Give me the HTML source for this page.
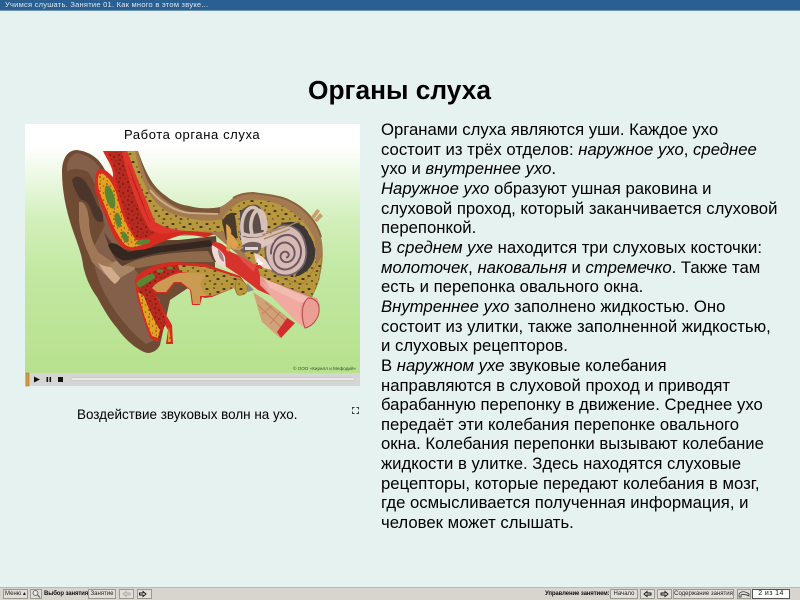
<!DOCTYPE html>
<html lang="ru"><head><meta charset="utf-8"><title>Органы слуха</title>
<style>
html,body{margin:0;padding:0;width:800px;height:600px;overflow:hidden;background:#e6f2ef;font-family:"Liberation Sans",sans-serif;color:#000}
#t{position:absolute;left:0;top:0;width:800px;height:11px;background:#2a5f92;border-bottom:1px solid #6f94b5;color:#dfe8f0;font-size:7.5px;line-height:10px;padding-left:5px;box-sizing:border-box;letter-spacing:.25px;white-space:nowrap}
h1{position:absolute;left:0;top:75px;width:799px;margin:0;text-align:center;font-size:26.3px;line-height:30px;font-weight:bold}
.l{position:absolute;left:381px;font-size:16.72px;line-height:20px;white-space:nowrap}
#cap{position:absolute;left:77px;top:406px;font-size:13.45px;line-height:18px;white-space:nowrap}
#pic{position:absolute;left:0;top:0}
#bar{position:absolute;left:0;top:587px;width:800px;height:13px;background:#d8d5ce;border-top:1px solid #bcbab3;box-sizing:border-box}
.b{position:absolute;top:589px;height:10px;box-sizing:border-box;background:#e2dfd8;border:1px solid #9a9a94;font-size:6px;line-height:8px;text-align:center;color:#222;white-space:nowrap}
.s{position:absolute;top:589px;font-size:6px;line-height:10px;font-weight:bold;white-space:nowrap;color:#111;letter-spacing:-.12px}
</style></head><body>
<div id="t">Учимся слушать. Занятие 01. Как много в этом звуке...</div>
<h1>Органы слуха</h1>
<svg id="pic" width="800" height="600" viewBox="0 0 800 600" xmlns="http://www.w3.org/2000/svg">
<defs>
<linearGradient id="g" x1="0" y1="0" x2="0" y2="1"><stop offset="0" stop-color="#fff"/><stop offset=".09" stop-color="#fff"/><stop offset=".38" stop-color="#d3efbc"/><stop offset=".6" stop-color="#c2e8a1"/><stop offset="1" stop-color="#b7e18d"/></linearGradient>
<pattern id="d" width="17" height="13" patternUnits="userSpaceOnUse"><rect width="17" height="13" fill="#b8983c"/><ellipse cx="3" cy="3" rx="1.6" ry="1" fill="#43301c"/><ellipse cx="10" cy="2" rx="1" ry=".8" fill="#56401f"/><ellipse cx="14" cy="6" rx="1.7" ry="1" fill="#43301c"/><ellipse cx="6" cy="8" rx="1.2" ry=".9" fill="#56401f"/><ellipse cx="11" cy="11" rx="1.5" ry=".8" fill="#43301c"/><ellipse cx="1" cy="11" rx=".8" ry=".7" fill="#56401f"/></pattern>
<pattern id="r" width="9" height="9" patternUnits="userSpaceOnUse"><rect width="9" height="9" fill="#b62a20"/><circle cx="2" cy="2" r="1" fill="#7c1a14"/><circle cx="6" cy="4" r="1.1" fill="#861d15"/><circle cx="3" cy="7" r=".9" fill="#7c1a14"/><circle cx="8" cy="8" r=".7" fill="#861d15"/></pattern>
<pattern id="o" width="7" height="7" patternUnits="userSpaceOnUse"><rect width="7" height="7" fill="#e3a21f"/><circle cx="2" cy="2" r=".9" fill="#93451a"/><circle cx="5.500" cy="4" r=".8" fill="#a84e18"/><circle cx="2.500" cy="6" r=".6" fill="#93451a"/></pattern>
</defs>
<rect x="25" y="124" width="335" height="249" fill="url(#g)"/>

<!-- outer ear -->
<path d="M77 150C68 150 62 158 62 172C62 190 66 210 72 228C78 245 82 255 83 265C86 280 92 290 97 297C104 310 110 320 117 328C124 338 132 345 137 348C143 352 146 353 149 353C155 352 158 349 160 345L170 300L215 270L215 240L130 240L100 180L105 170C100 160 92 152 77 150Z" fill="#6f4b34"/>
<path d="M77 153C70 155 66 162 67 172C71 168 80 168 88 172C93 178 96 186 98 200L105 225L92 250C94 265 96 275 102 288C108 302 125 328 146 344L155 340L160 300L135 270L120 240L100 195C97 178 98 170 100 168C94 160 88 155 77 153Z" fill="#84604a"/>
<path d="M72 180C75 174 82 176 87 184C92 192 94 197 97 205C101 209 104 214 103 221C98 224 95 220 92 213C90 204 85 200 81 200C78 195 74 190 72 180Z" fill="#4c362b"/>
<path d="M79 202C84 200 88 208 89 220C89 232 92 242 98 252C106 258 112 262 118 266L105 275L92 262C86 248 80 235 79 220Z" fill="#a07858"/>
<path d="M98 263C106 268 112 266 120 270C124 274 120 280 115 284C112 282 106 276 98 263Z" fill="#d2ab8b"/>
<path d="M109 265C118 258 128 258 138 262L134 270L120 278Z" fill="#a88566"/>
<path d="M104 232C110 240 116 252 126 250L160 242L216 236L218 262L165 262C148 262 132 264 122 266C112 258 108 244 104 232Z" fill="#5d4130"/>
<path d="M108 245C113 240 120 246 128 252L160 246L210 240L214 246L165 252C145 254 132 262 122 260C114 257 110 250 108 245Z" fill="#352620"/>
<path d="M125 265C140 256 170 252 208 251L214 262L170 262L138 268Z" fill="#8e6a4b"/>

<!-- head skin -->
<path d="M127 151H138C141 160 145 170 149 177C154 186 159 191 166 196C173 202 181 205 189 206C200 209 212 209 220 207C225 205 229 201 233 198C240 194 247 193 253 193C270 195 283 197 290 201C305 208 317 222 321 237C324 250 323 265 319 280C316 291 312 296 310 298L285 290L250 265L215 235L165 236L145 215Z" fill="#a47b50"/>
<path d="M138 151C141 160 145 170 149 177C154 186 159 191 166 196C173 202 181 205 189 206C200 209 212 209 220 207L220 213C205 215 190 213 180 209C165 202 155 192 148 182C143 170 140 160 138 151Z" fill="#7a5738"/>
<path d="M150 190C160 202 175 212 190 213L218 214" stroke="#cfae8a" stroke-width="1.800" fill="none"/>
<path d="M233 198C240 194 247 193 253 193C270 195 283 197 290 201C305 208 317 222 321 237" stroke="#8a623e" stroke-width="2" fill="none"/>
<!-- bone -->
<path d="M127 151H135C137 163 141 176 145 185C150 197 157 204 162 208C170 214 178 216 185 217C198 221 210 222 222 219C227 212 233 206 240 202C250 198 266 199 280 205C295 212 308 224 314 238C317 252 317 268 313 282L311 296L300 293L262 274L225 232L185 231L155 225C148 215 143 205 140 195Z" fill="url(#d)"/>
<path d="M222 221C226 215 230 212 234 213C237 222 236 232 238 238L226 240Z" fill="#4a3a2c"/>
<path d="M280 225C290 219 302 222 308 232C311 240 313 255 311 262L300 230Z" fill="#3c3636"/>

<!-- upper red cartilage -->
<path d="M103 151H127L137 178L155 222C165 228 175 231 190 231L212 233C214 234 210 237 204 237L185 234C170 238 160 243 155 245C148 249 143 250 138 250C130 251 126 250 122 247C117 242 113 235 110 228L98 198C95 192 94 187 95 182C95 176 96 172 98 170C101 168 104 169 105 170C108 172 111 175 113 177C114 168 107 160 103 151Z" fill="#d72a20"/>
<path d="M99 174C103 172 106 176 109 179C113 185 116 190 118 200C122 215 127 228 136 240L148 243L135 247C128 248 124 245 120 238C115 230 112 224 109 216L100 194C98 187 97 180 99 174Z" fill="url(#o)"/>
<path d="M108 152H122C124 168 131 185 138 202C144 215 150 225 156 232L147 238L136 238C129 226 124 212 121 200C118 190 115 180 115 172C114 165 110 158 108 152Z" fill="url(#r)"/>
<path d="M122 151H127L137 178L155 222C165 228 175 231 190 231L160 234L150 230C138 210 128 180 122 151Z" fill="#e0352a"/>
<path d="M128 165L146 212M132 178L150 222" stroke="#a8241c" stroke-width=".6"/>
<ellipse cx="110" cy="197" rx="4.200" ry="12" transform="rotate(-16 110 197)" fill="#5a8533"/>
<ellipse cx="118" cy="220" rx="3" ry="7.500" transform="rotate(-10 118 220)" fill="#5a8533"/>
<ellipse cx="125" cy="237" rx="2.800" ry="6" transform="rotate(-25 125 237)" fill="#5a8533"/>
<ellipse cx="143" cy="242" rx="7.500" ry="2.500" transform="rotate(-10 143 242)" fill="#5a8533"/>

<!-- lower tissue -->
<path d="M135 280C136 277 137 276 138 275C144 270 150 267 157 265C163 263 169 262 175 262L205 264L240 276L245 283L248 290L238 295L234 288L212 297L205 298L202 297L200 305H192L190 290L180 283H175L167 293H157L155 293L165 313L172 325L173 344H166L168 330L165 325L158 342L150 338L143 317L137 297Z" fill="#d72a20"/>
<path d="M138 284C144 275 156 268 175 265L192 267C175 272 160 278 152 288L158 300C162 310 167 322 165 325L160 338L152 336L146 316L140 298Z" fill="url(#r)"/>
<path d="M138 292C141 305 145 320 152 336L158 338L160 330C155 322 148 308 144 296Z" fill="url(#o)"/>
<path d="M169 327L171 342H168C168 338 168 332 169 327Z" fill="url(#o)"/>
<path d="M136 283C141 278 146 276 152 273L156 277L149 282L141 287C139 288 137 286 136 283Z" fill="#5a8533"/>
<ellipse cx="160" cy="271" rx="3.500" ry="1.800" fill="#5a8533"/>
<ellipse cx="170" cy="268" rx="3" ry="1.500" fill="#5a8533"/>
<path d="M152 288C156 283 160 281 163 280C170 276 175 274 180 273L205 272L234 284L212 295L205 296L200 296L200 304H193L191 290L181 282H174L166 292H157Z" fill="#cb9a53"/>
<path d="M178 265L205 267L240 278L245 283L248 290L238 295L234 288L212 296L204 293L200 284L206 274L180 272Z" fill="url(#d)"/>
<path d="M237 279C241 279 246 283 248 288C248 293 243 296 238 295C235 292 234 285 237 279Z" fill="url(#d)" stroke="#8f7130" stroke-width=".7"/>
<path d="M247 283L254 290L248 292Z" fill="#8f8a84"/>

<!-- muscle -->
<path d="M253 292L262 322L280 338L295 323L268 302Z" fill="#cfa278"/>
<path d="M258 305L282 328M265 302L287 322M262 314L272 306M270 324L280 312" stroke="#c9805e" stroke-width="1"/>
<path d="M277 332L287 318L295 323L281 338Z" fill="#d42c2e"/>

<!-- middle ear -->
<path d="M212 243C218 240 225 245 231 252L238 255L247 263L260 265L268 272L262 284L274 297L258 290L240 276L225 266L214 255Z" fill="#d8322c"/>
<path d="M212 245C218 248 223 252 225 257L226 269C222 267 218 265 216 262C213 256 211 250 212 245Z" fill="#efd9d6"/>
<path d="M218 249C222 252 224 257 224 262C220 260 218 255 218 249Z" fill="#a58284"/>
<path d="M226 224C230 226 232 230 231 234C234 236 238 242 239 246L234 250L231 247L229 252L226 250C228 243 226 235 226 224Z" fill="#dda04c"/>
<path d="M238 255L256 265L254 272L243 262Z" fill="#e44c44"/>

<!-- Eustachian tube -->
<path d="M260 275L268 280L312 297L317 298L320 305L315 320L305 328L298 323L272 297L260 285Z" fill="#e89a90"/>
<path d="M262 282L290 296L302 303C299 312 300 318 305 328L298 323L272 297Z" fill="#f2a9a0"/>
<path d="M262 276L290 290L310 298C306 300 303 302 302 303L270 288Z" fill="#f3bcb2"/>
<path d="M308 298C316 298 320 304 319 312C318 320 311 327 305 328C301 318 301 304 308 298Z" fill="#ec9d94" stroke="#b44648" stroke-width="1"/>

<!-- lower right bone -->
<path d="M258 269C264 266 268 268 272 272C285 280 295 284 304 283C310 276 316 266 322 255L319 280L312 297L268 280L260 275Z" fill="url(#d)" stroke="#8f7130" stroke-width=".5"/>

<!-- cochlea -->
<g transform="translate(286 250) scale(1.08) translate(-286 -250)">
<path d="M282 225C298 222 311 235 313 250C314 262 306 272 294 275C300 265 304 250 300 238C295 230 290 227 282 225Z" fill="#3c3636"/>
<path d="M280 228C275 230 270 234 268 241C265 254 268 266 278 272C288 276 298 272 303 262C307 252 304 237 296 231C291 227 285 226 280 228Z" fill="#d6bab3" stroke="#6f6068" stroke-width="1.600"/>
<path d="M272 254C272 244 278 236 288 236C297 237 302 248 299 257C296 266 286 271 279 266C272 261 274 248 281 244C287 241 294 246 294 253C294 260 286 264 282 259C279 255 283 250 287 252C290 254 288 257 286 257" fill="none" stroke="#6e5560" stroke-width="1.800"/>
</g>
<!-- canals -->
<path d="M240 212C246 205 254 203 259 206C265 212 268 225 265 236L240 240Z" fill="#5b5049"/>
<g fill="none" stroke="#d7c0b8" stroke-width="3.600">
<path d="M243 236C240 224 243 212 250 208C258 205 262 215 263 230"/>
<path d="M252 234C249 224 252 214 257 210C265 210 267 222 265 234"/>
<path d="M242 233C248 237 258 236 270 232"/>
</g>
<path d="M240 235C248 240 260 238 270 234L274 242L262 248L243 247Z" fill="#dcc6be"/>
<path d="M262 235L288 226L305 219M264 239L290 229M266 232L282 228" stroke="#a8885e" stroke-width="1.300" fill="none"/>
<path d="M243 245C248 241 256 241 261 244C262 248 260 253 256 254C252 250 248 251 244 253C240 252 240 248 243 245Z" fill="#6d5e5c"/>
<path d="M245 247H258V250H245Z" fill="#e2d5d0"/>
<path d="M254 253C258 254 263 256 267 262L272 270L264 268L256 262Z" fill="#efd9d2"/>
<path d="M257 258L264 264L258 265Z" fill="#fff"/>
<path d="M234 248C238 250 241 249 243 247" stroke="#caa06a" stroke-width="1.500" fill="none"/>
<path d="M311 217L317 209L320 211L314 219Z M314 220L320 213L323 216L317 222Z" fill="#c9a06b"/>

<!-- copyright -->
<text x="293" y="370" font-family="Liberation Sans, sans-serif" font-size="4.6" fill="#3b4a30">© ООО «Кирилл и Мефодий»</text>
<!-- player -->
<rect x="25" y="373" width="335" height="13" fill="#d5d5d3"/>
<rect x="26" y="373" width="3" height="13" fill="#e39a2b" stroke="#8d7b55" stroke-width=".6"/>
<path d="M34 376.500L40 379.500L34 382.500Z" fill="#111"/>
<rect x="46.500" y="377" width="1.600" height="5" fill="#111"/><rect x="49.500" y="377" width="1.600" height="5" fill="#111"/>
<rect x="58" y="377" width="5" height="5" fill="#111"/>
<rect x="71" y="378" width="284" height="2" rx="1" fill="#fbfbfa" stroke="#b3b3b1" stroke-width=".5"/>
<g fill="#3d4142"><path d="M352 407h2.500v1h-1.500v1.500h-1zM359 407h-2.500v1h1.500v1.500h1zM352 414h2.500v-1h-1.500v-1.500h-1zM359 414h-2.500v-1h1.500v-1.500h1z"/></g>
</svg>
<div style="position:absolute;left:124px;top:127px;font-size:13px;line-height:16px;letter-spacing:.6px;white-space:nowrap">Работа органа слуха</div>
<div id="cap">Воздействие звуковых волн на ухо.</div>

<div class="l" style="top:120px">Органами слуха являются уши. Каждое ухо</div>
<div class="l" style="top:139.6px">состоит из трёх отделов: <i>наружное ухо</i>, <i>среднее</i></div>
<div class="l" style="top:159.3px">ухо и <i>внутреннее ухо</i>.</div>
<div class="l" style="top:179px"><i>Наружное ухо</i> образуют ушная раковина и</div>
<div class="l" style="top:198.6px">слуховой проход, который заканчивается слуховой</div>
<div class="l" style="top:218.3px">перепонкой.</div>
<div class="l" style="top:237.9px">В <i>среднем ухе</i> находится три слуховых косточки:</div>
<div class="l" style="top:257.6px"><i>молоточек</i>, <i>наковальня</i> и <i>стремечко</i>. Также там</div>
<div class="l" style="top:277.2px">есть и перепонка овального окна.</div>
<div class="l" style="top:296.9px"><i>Внутреннее ухо</i> заполнено жидкостью. Оно</div>
<div class="l" style="top:316.5px">состоит из улитки, также заполненной жидкостью,</div>
<div class="l" style="top:336.2px">и слуховых рецепторов.</div>
<div class="l" style="top:355.8px">В <i>наружном ухе</i> звуковые колебания</div>
<div class="l" style="top:375.5px">направляются в слуховой проход и приводят</div>
<div class="l" style="top:395.1px">барабанную перепонку в движение. Среднее ухо</div>
<div class="l" style="top:414.8px">передаёт эти колебания перепонке овального</div>
<div class="l" style="top:434.4px">окна. Колебания перепонки вызывают колебание</div>
<div class="l" style="top:454.1px">жидкости в улитке. Здесь находятся слуховые</div>
<div class="l" style="top:473.7px">рецепторы, которые передают колебания в мозг,</div>
<div class="l" style="top:493.4px">где осмысливается полученная информация, и</div>
<div class="l" style="top:513px">человек может слышать.</div>

<div id="bar"></div>
<div class="b" style="left:3px;width:25px">Меню ▴</div>
<div class="b" style="left:30px;width:12px"></div>
<svg style="position:absolute;left:31px;top:589px" width="10" height="10" viewBox="0 0 10 10"><circle cx="4.500" cy="4" r="2.500" fill="#e8e8e8" stroke="#555" stroke-width=".8"/><path d="M6.500 6L9 8.500" stroke="#555" stroke-width="1"/></svg>
<div class="s" style="left:44px">Выбор занятия:</div>
<div class="b" style="left:88px;width:28px">Занятие</div>
<div class="b" style="left:119px;width:15px"></div>
<div class="b" style="left:137px;width:15px"></div>
<svg style="position:absolute;left:118px;top:589px" width="34" height="10" viewBox="0 0 34 10"><path d="M5 5L8 2.500V4H12V6H8V7.500Z" fill="none" stroke="#aaa" stroke-width=".9"/><path d="M28 5L25 2.500V4H21.500V6H25V7.500Z" fill="#e8e8e8" stroke="#111" stroke-width=".9"/></svg>
<div class="s" style="left:545px">Управление занятием:</div>
<div class="b" style="left:610px;width:28px">Начало</div>
<div class="b" style="left:640px;width:15px"></div>
<div class="b" style="left:657px;width:15px"></div>
<div class="b" style="left:673px;width:61px">Содержание занятия</div>
<div class="b" style="left:737px;width:14px"></div>
<svg style="position:absolute;left:640px;top:589px" width="112" height="10" viewBox="0 0 112 10"><path d="M4 5L7 2.500V4H11V6H7V7.500Z" fill="#e8e8e8" stroke="#111" stroke-width=".9"/><path d="M28 5L25 2.500V4H21V6H25V7.500Z" fill="#e8e8e8" stroke="#111" stroke-width=".9"/><path d="M99 8V5C101 2 105 2 109 5L109 7C105 5 103 5 101 6V8Z" fill="none" stroke="#333" stroke-width=".8"/></svg>
<div class="b" style="left:752px;width:38px;background:#fff;border-color:#555;font-size:7px;color:#111;letter-spacing:.4px">2 из 14</div>
</body></html>
